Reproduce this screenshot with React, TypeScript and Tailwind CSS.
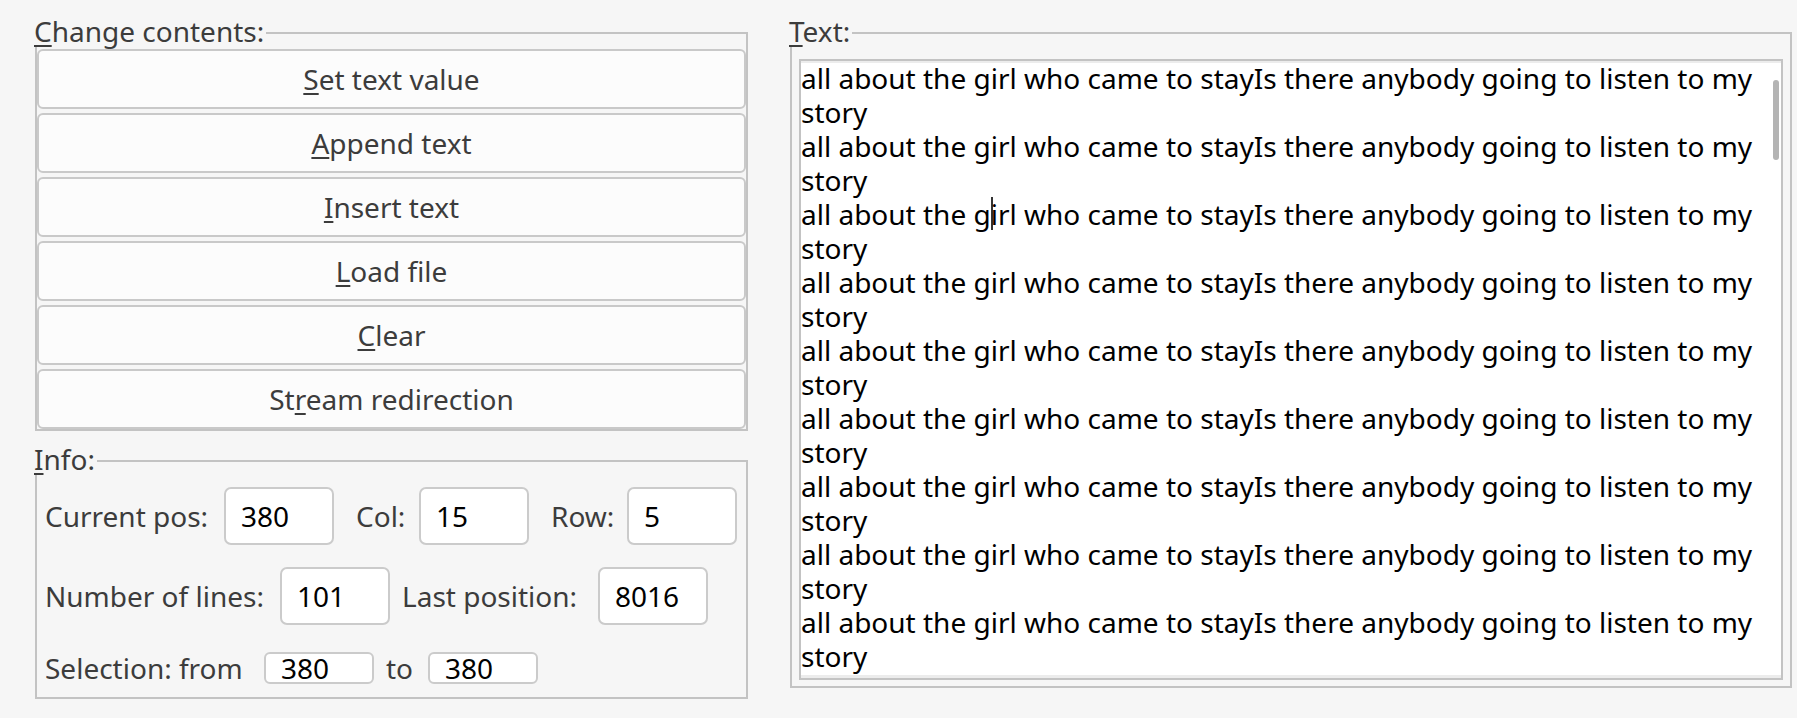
import React from 'react';

const LINE = 'all about the girl who came to stayIs there anybody going to listen to my';

function Mnemonic({ text, at }: { text: string; at: number }) {
  return (
    <>
      {text.slice(0, at)}
      <span className="underline decoration-2 underline-offset-[3px]">{text[at]}</span>
      {text.slice(at + 1)}
    </>
  );
}

// Qt-style group box: title sits at the top-left, frame line starts after it
function GroupBox({
  title,
  at,
  className,
  bodyClass,
  children,
}: {
  title: string;
  at: number;
  className: string;
  bodyClass: string;
  children: React.ReactNode;
}) {
  return (
    <div className={'flex flex-col ' + className}>
      <div className="flex h-[32px]">
        <span className="-ml-px whitespace-nowrap leading-8 text-[#3c3c3c]">
          <Mnemonic text={title} at={at} />
        </span>
        <div className="ml-[2px] mt-[17px] flex-1 border-r-2 border-t-2 border-[#c3c3c3]" />
      </div>
      <div className={'border-x-2 border-b-2 border-[#c3c3c3] ' + bodyClass}>{children}</div>
    </div>
  );
}

function PushButton({ text, at }: { text: string; at: number }) {
  return (
    <button className="h-[60px] w-full rounded-[6px] border-2 border-[#c9c9c9] bg-[#fcfcfc] text-[#3c3c3c] leading-8">
      <Mnemonic text={text} at={at} />
    </button>
  );
}

function Field({
  label,
  labelWidth,
  value,
  tall = true,
}: {
  label: string;
  labelWidth: string;
  value: string;
  tall?: boolean;
}) {
  return (
    <div className="flex items-center gap-[14px]">
      <span className={'whitespace-nowrap ' + labelWidth}>{label}</span>
      <div
        className={
          tall
            ? 'flex h-[58px] w-[110px] items-center rounded-[7px] border-2 border-[#cbcbcb] bg-white pl-[15px] text-black'
            : 'flex h-[32px] w-[110px] items-center rounded-[6px] border-2 border-[#cbcbcb] bg-white pl-[15px] leading-none text-black'
        }
      >
        {value}
      </div>
    </div>
  );
}

export default function App() {
  const buttons: [string, number][] = [
    ['Set text value', 0],
    ['Append text', 0],
    ['Insert text', 0],
    ['Load file', 0],
    ['Clear', 0],
    ['Stream redirection', 2],
  ];

  return (
    <div className="flex h-[718px] w-[1797px] items-start gap-[42px] bg-[#f6f6f6] pl-[35px] pt-[15px] font-['Noto_Sans',sans-serif] text-[28px]">
      {/* left column */}
      <div className="flex w-[713px] flex-col gap-[12px]">
        <GroupBox title="Change contents:" at={0} className="" bodyClass="flex flex-col gap-[4px] pt-[2px]">
          {buttons.map(([t, a]) => (
            <PushButton key={t} text={t} at={a} />
          ))}
        </GroupBox>

        <GroupBox
          title="Info:"
          at={0}
          className=""
          bodyClass="flex flex-col gap-[22px] pb-[8px] pl-[8px] pt-[12px] text-[#3c3c3c]"
        >
          <div className="flex items-center gap-[22px]">
            <Field label="Current pos:" labelWidth="w-[165px]" value="380" />
            <Field label="Col:" labelWidth="w-[49px]" value="15" />
            <Field label="Row:" labelWidth="w-[62px]" value="5" />
          </div>
          <div className="flex items-center gap-[12px]">
            <Field label="Number of lines:" labelWidth="w-[221px]" value="101" />
            <Field label="Last position:" labelWidth="w-[182px]" value="8016" />
          </div>
          <div className="flex items-center gap-[12px]">
            <Field label="Selection: from" labelWidth="w-[205px]" value="380" tall={false} />
            <Field label="to" labelWidth="w-[28px]" value="380" tall={false} />
          </div>
        </GroupBox>
      </div>

      {/* right column */}
      <GroupBox title="Text:" at={0} className="w-[1002px]" bodyClass="px-[7px] pb-[6px] pt-[12px]">
        <div className="relative h-[621px] overflow-hidden border-2 border-[#c3c3c3] bg-white">
          <div className="h-full border-b-[3px] border-t-2 border-[#ececec] leading-[34px] text-black">
            <div className="-mt-[2px]">
              {Array.from({ length: 10 }).map((_, i) => (
                <div key={i}>
                  <div className="whitespace-nowrap">
                    {i === 2 ? (
                      <>
                        all about the g
                        <span className="-mr-[2px] inline-block h-[33px] w-[2px] bg-[#333] align-top" />
                        irl who came to stayIs there anybody going to listen to my
                      </>
                    ) : (
                      LINE
                    )}
                  </div>
                  <div>story</div>
                </div>
              ))}
            </div>
          </div>
          {/* vertical scrollbar thumb */}
          <div className="absolute right-[2px] top-[19px] h-[80px] w-[6px] rounded-full bg-[#b4b4b4]" />
        </div>
      </GroupBox>
    </div>
  );
}
